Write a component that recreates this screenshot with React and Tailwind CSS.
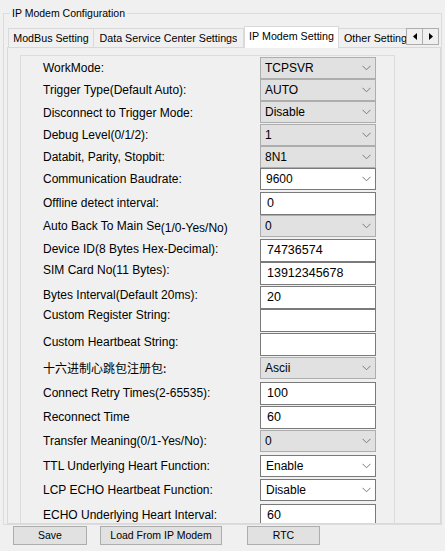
import React from "react";

const rows = [
  { label: "WorkMode:", kind: "combo", value: "TCPSVR", h: 22 },
  { label: "Trigger Type(Default Auto):", kind: "combo", value: "AUTO", h: 22 },
  { label: "Disconnect to Trigger Mode:", kind: "combo", value: "Disable", h: 23, dy: "mt-[1px]" },
  { label: "Debug Level(0/1/2):", kind: "combo", value: "1", h: 22 },
  { label: "Databit, Parity, Stopbit:", kind: "combo", value: "8N1", h: 22 },
  { label: "Communication Baudrate:", kind: "wcombo", value: "9600", h: 24 },
  { label: "Offline detect interval:", kind: "text", value: "0", h: 23 },
  { label: "autoback", kind: "combo", value: "0", h: 24 },
  { label: "Device ID(8 Bytes Hex-Decimal):", kind: "text", value: "74736574", h: 23, dy: "-mt-[1px]" },
  { label: "SIM Card No(11 Bytes):", kind: "text", value: "13912345678", h: 24, dy: "-mt-[3px]" },
  { label: "Bytes Interval(Default 20ms):", kind: "text", value: "20", h: 23, dy: "-mt-[2px]" },
  { label: "Custom Register String:", kind: "text", value: "", h: 24, dy: "-mt-[5px]" },
  { label: "Custom Heartbeat String:", kind: "text", value: "", h: 24, dy: "-mt-[2px]" },
  { label: "十六进制心跳包注册包:", kind: "combo", value: "Ascii", h: 25, cjk: true },
  { label: "Connect Retry Times(2-65535):", kind: "text", value: "100", h: 24 },
  { label: "Reconnect Time", kind: "text", value: "60", h: 24 },
  { label: "Transfer Meaning(0/1-Yes/No):", kind: "combo", value: "0", h: 25 },
  { label: "TTL Underlying Heart Function:", kind: "wcombo", value: "Enable", h: 24 },
  { label: "LCP ECHO Heartbeat Function:", kind: "wcombo", value: "Disable", h: 25 },
  { label: "ECHO Underlying Heart Interval:", kind: "text", value: "60", h: 24 },
];

const Chevron = () => (
  <svg width="9" height="6" viewBox="0 0 9 6" className="shrink-0">
    <path d="M0.5 0.8 L4.5 4.8 L8.5 0.8" fill="none" stroke="#7a7a7a" strokeWidth="1" />
  </svg>
);

const Control = ({ kind, value }) => {
  if (kind === "text") {
    return (
      <div className="w-[116px] h-[23px] bg-white border border-[#7a7a7a] flex items-center pl-[6px] text-[12.5px]">
        {value}
      </div>
    );
  }
  const gray = kind === "combo";
  return (
    <div
      className={`w-[116px] h-[22px] border flex items-center justify-between pr-[4px] text-[12px] ${
        gray ? "bg-[#e1e1e1] border-[#adadad] pl-[4px]" : "bg-white border-[#7a7a7a] pl-[5px]"
      }`}
    >
      <span>{value}</span>
      <Chevron />
    </div>
  );
};

const Label = ({ row }) => {
  if (row.label === "autoback") {
    return (
      <div className="w-[217px] h-[22px] flex items-center shrink-0">
        <span>Auto Back To Main Se</span>
        <span className="relative top-[2px]">(1/0-Yes/No)</span>
      </div>
    );
  }
  return (
    <div
      className={`w-[217px] h-[22px] flex items-center shrink-0 ${row.dy || ""} ${
        row.cjk ? "font-['Noto_Sans_CJK_SC',sans-serif] text-[12px]" : ""
      }`}
    >
      {row.label}
    </div>
  );
};

const Tab = ({ children, w, selected }) => (
  <div
    className={`${w} flex items-center justify-center border-t border-l border-r border-[#d9d9d9] text-[10.7px] ${
      selected ? "h-[22px] bg-white relative z-10 -mb-px pb-[2px]" : "h-[19px] bg-[#f0f0f0] -ml-px"
    }`}
  >
    <span className="whitespace-nowrap overflow-hidden">{children}</span>
  </div>
);

export default function App() {
  return (
    <div className="w-[445px] h-[551px] bg-[#f0f0f0] overflow-hidden text-black font-['Liberation_Sans',Arial,sans-serif] text-[12px] select-none">
      {/* Group box */}
      <div className="relative mt-[13px] ml-[3px] w-[439px] h-[512px] border border-[#dcdcdc]">
        <span className="absolute -top-[8px] left-[6px] px-[2px] bg-[#f0f0f0] text-[10.5px] leading-[14px]">
          IP Modem Configuration
        </span>

        <div className="pt-[12px] pl-[3px]">
          {/* Tab strip */}
          <div className="flex items-end h-[21px] pl-[2px]">
            <Tab w="w-[86px]">ModBus Setting</Tab>
            <Tab w="w-[151px]">Data Service Center Settings</Tab>
            <Tab w="w-[95px]" selected>
              IP Modem Setting
            </Tab>
            <div className="w-[68px] h-[19px] -ml-px border-t border-l border-[#d9d9d9] bg-[#f0f0f0] flex items-center pl-[5px] overflow-hidden text-[10.7px] whitespace-nowrap">
              Other Setting
            </div>
            <div className="self-start mt-[2px] flex">
              <div className="w-[17px] h-[17px] border border-[#adadad] bg-[#f0f0f0] flex items-center justify-center">
                <svg width="4" height="7" viewBox="0 0 4 7">
                  <path d="M4 0 L0 3.5 L4 7 Z" fill="#000" />
                </svg>
              </div>
              <div className="w-[17px] h-[17px] -ml-px border border-[#adadad] bg-[#f0f0f0] flex items-center justify-center">
                <svg width="4" height="7" viewBox="0 0 4 7">
                  <path d="M0 0 L4 3.5 L0 7 Z" fill="#000" />
                </svg>
              </div>
            </div>
          </div>

          {/* Tab page */}
          <div className="w-[434px] h-[477px] border border-[#d9d9d9] bg-[#f0f0f0] overflow-hidden">
            <div className="mt-[7px] ml-[12px] w-[375px] h-[470px] border-t border-l border-r border-[#dcdcdc] overflow-hidden pt-[1px]">
              {rows.map((row, i) => (
                <div key={i} className="flex items-start pl-[22px] shrink-0" style={{ height: row.h }}>
                  <Label row={row} />
                  <Control kind={row.kind} value={row.value} />
                </div>
              ))}
            </div>
          </div>
        </div>
      </div>

      {/* Bottom buttons */}
      <div className="flex items-center mt-px text-[10.5px]">
        <button className="ml-[13px] w-[74px] h-[19px] bg-[#e1e1e1] border border-[#adadad]">Save</button>
        <button className="ml-[13px] w-[122px] h-[19px] bg-[#e1e1e1] border border-[#adadad]">Load From IP Modem</button>
        <button className="ml-[25px] w-[73px] h-[19px] bg-[#e1e1e1] border border-[#adadad]">RTC</button>
      </div>
    </div>
  );
}
